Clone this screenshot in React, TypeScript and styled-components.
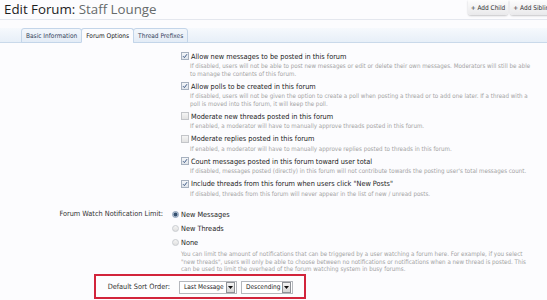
import React from "react";
import styled, { createGlobalStyle } from "styled-components";

const Global = createGlobalStyle`
  html, body { margin: 0; padding: 0; background: #fcfcfe; }
  body { width: 547px; height: 300px; overflow: hidden; }
`;

const Page = styled.div`
  width: 547px;
  height: 300px;
  overflow: hidden;
  background: #fcfcfe;
  font-family: "DejaVu Sans Condensed", "DejaVu Sans", sans-serif;
  color: #222;
`;

const Header = styled.header`
  display: flex;
  justify-content: space-between;
  align-items: flex-start;
  height: 19px;
  border-bottom: 1px solid #e4e7ee;
`;

const Title = styled.h1`
  margin: 0;
  padding: 1px 0 0 4px;
  font: normal 13.3px/16px "Open Sans", sans-serif;
  color: #1d1d1d;
`;

const TitleSub = styled.span`
  color: #666b6b;
`;

const Actions = styled.div`
  display: flex;
  gap: 2px;
  margin-right: -9px;
`;

const ActionButton = styled.span`
  display: inline-flex;
  align-items: center;
  height: 15px;
  padding: 0 3px;
  font-size: 6.5px;
  color: #333;
  border-radius: 0 0 3px 3px;
  background: linear-gradient(#fdfdfd, #e9e9eb);
  box-shadow: 0 1px 2px rgba(0, 0, 0, 0.22);
`;

const TabBar = styled.nav`
  display: flex;
  align-items: flex-end;
  margin-top: 8px;
  height: 14px;
  padding-left: 21px;
  background: linear-gradient(#f6f9fd, #e7eff8);
  border-bottom: 1px solid #c9d9ea;
`;

const Tab = styled.span<{ $active?: boolean }>`
  display: inline-flex;
  align-items: center;
  height: 13px;
  margin-bottom: -1px;
  padding: 0 4px;
  font-size: 6.5px;
  color: ${(p) => (p.$active ? "#222" : "#33425a")};
  background: ${(p) => (p.$active ? "#fcfcfe" : "linear-gradient(#f3f7fc, #e3ecf6)")};
  border: 1px solid #c3d5e9;
  border-bottom-color: ${(p) => (p.$active ? "#fcfcfe" : "#c3d5e9")};
  border-radius: 3px 3px 0 0;
  & + & {
    margin-left: -1px;
  }
`;

const Form = styled.div`
  padding-top: 8px;
`;

const Row = styled.div<{ $top?: number }>`
  display: grid;
  grid-template-columns: 163px 1fr;
  column-gap: 9px;
  margin-top: ${(p) => p.$top ?? 0}px;
`;

const RowLabel = styled.div`
  text-align: right;
  font-size: 7.3px;
  line-height: 14px;
  color: #333;
`;

const CheckList = styled.div`
  padding-left: 9px;
  padding-right: 10px;
`;

const CheckItem = styled.div`
  margin-bottom: 4px;
`;

const OptionLine = styled.div<{ $h: number }>`
  display: flex;
  align-items: center;
  gap: 2px;
  height: ${(p) => p.$h}px;
  font-size: 7.3px;
  color: #222;
`;

const Box = styled.span<{ $checked?: boolean }>`
  position: relative;
  flex: none;
  width: 6px;
  height: 6px;
  border: 1px solid ${(p) => (p.$checked ? "#a7b1bf" : "#c3c5c9")};
  background: ${(p) => (p.$checked ? "linear-gradient(#f4f6f9, #dfe4ea)" : "linear-gradient(#f5f5f5, #e2e2e2)")};
`;

const CheckSvg = styled.svg`
  position: absolute;
  left: 0;
  top: 0;
`;

const Radio = styled.span<{ $checked?: boolean }>`
  flex: none;
  width: 5px;
  height: 5px;
  border-radius: 50%;
  border: 1px solid ${(p) => (p.$checked ? "#8da0b8" : "#c9ccd0")};
  background: ${(p) =>
    p.$checked
      ? "radial-gradient(circle at 50% 50%, #34506f 0 1.6px, #aebccd 2.2px)"
      : "linear-gradient(#f4f4f4, #e0e0e0)"};
`;

const Desc = styled.div<{ $indent: number; $right?: number }>`
  padding-left: ${(p) => p.$indent}px;
  padding-right: ${(p) => p.$right ?? 0}px;
  margin-top: 1px;
  font-size: 6.2px;
  line-height: 7.5px;
  color: #a3a3a3;
`;

const SortBox = styled.div`
  display: grid;
  grid-template-columns: 74px auto;
  column-gap: 9px;
  align-items: center;
  margin: 1px 0 0 94px;
  width: 208px;
  height: 21px;
  border: 2px solid #d2243b;
  background: #fdfdfe;
`;

const SortLabel = styled.div`
  text-align: right;
  font-size: 7.3px;
  color: #333;
`;

const Selects = styled.div`
  display: flex;
  gap: 4px;
  margin-top: 2px;
`;

const Select = styled.div<{ $w: number }>`
  display: flex;
  align-items: center;
  justify-content: space-between;
  width: ${(p) => p.$w}px;
  height: 13px;
  box-sizing: border-box;
  padding: 0 1px 0 4px;
  border: 1px solid #b5b8bd;
  background: #fff;
  font-size: 6.5px;
  color: #222;
`;

const DropButton = styled.span`
  display: flex;
  align-items: center;
  justify-content: center;
  width: 7px;
  height: 9px;
  border: 1px solid #8e9196;
  background: linear-gradient(#f4f4f4, #d6d6d6);
`;

const CheckMark = () => (
  <CheckSvg width="6" height="6" viewBox="0 0 6 6">
    <path d="M1 3.2 L2.4 4.6 L5 1.2" fill="none" stroke="#3f5a86" strokeWidth="1" />
  </CheckSvg>
);

const Arrow = () => (
  <svg width="5" height="3" viewBox="0 0 5 3">
    <path d="M0 0 H5 L2.5 3 Z" fill="#111" />
  </svg>
);

const checks = [
  {
    checked: true,
    label: "Allow new messages to be posted in this forum",
    desc: "If disabled, users will not be able to post new messages or edit or delete their own messages. Moderators will still be able to manage the contents of this forum.",
  },
  {
    checked: true,
    label: "Allow polls to be created in this forum",
    desc: "If disabled, users will not be given the option to create a poll when posting a thread or to add one later. If a thread with a poll is moved into this forum, it will keep the poll.",
  },
  {
    checked: false,
    label: "Moderate new threads posted in this forum",
    desc: "If enabled, a moderator will have to manually approve threads posted in this forum.",
  },
  {
    checked: false,
    label: "Moderate replies posted in this forum",
    desc: "If enabled, a moderator will have to manually approve replies posted to threads in this forum.",
  },
  {
    checked: true,
    label: "Count messages posted in this forum toward user total",
    desc: "If disabled, messages posted (directly) in this forum will not contribute towards the posting user's total messages count.",
  },
  {
    checked: true,
    label: 'Include threads from this forum when users click "New Posts"',
    desc: "If disabled, threads from this forum will never appear in the list of new / unread posts.",
  },
];

const radios = [
  { label: "New Messages", checked: true },
  { label: "New Threads", checked: false },
  { label: "None", checked: false },
];

export default function App() {
  return (
    <Page>
      <Global />
      <Header>
        <Title>
          Edit Forum: <TitleSub>Staff Lounge</TitleSub>
        </Title>
        <Actions>
          <ActionButton>+ Add Child</ActionButton>
          <ActionButton>+ Add Sibling</ActionButton>
        </Actions>
      </Header>
      <TabBar>
        <Tab>Basic Information</Tab>
        <Tab $active>Forum Options</Tab>
        <Tab>Thread Prefixes</Tab>
      </TabBar>
      <Form>
        <Row>
          <div />
          <CheckList>
            {checks.map((c) => (
              <CheckItem key={c.label}>
                <OptionLine $h={10}>
                  <Box $checked={c.checked}>{c.checked && <CheckMark />}</Box>
                  {c.label}
                </OptionLine>
                <Desc $indent={9}>{c.desc}</Desc>
              </CheckItem>
            ))}
          </CheckList>
        </Row>
        <Row $top={6}>
          <RowLabel>Forum Watch Notification Limit:</RowLabel>
          <div>
            {radios.map((r) => (
              <OptionLine key={r.label} $h={14}>
                <Radio $checked={r.checked} />
                {r.label}
              </OptionLine>
            ))}
            <Desc $indent={9} $right={12}>
              You can limit the amount of notifications that can be triggered by a user watching a forum here. For example, if you
              select "new threads", users will only be able to choose between no notifications or notifications when a new thread is
              posted. This can be used to limit the overhead of the forum watching system in busy forums.
            </Desc>
          </div>
        </Row>
        <SortBox>
          <SortLabel>Default Sort Order:</SortLabel>
          <Selects>
            <Select $w={58}>
              Last Message
              <DropButton>
                <Arrow />
              </DropButton>
            </Select>
            <Select $w={52}>
              Descending
              <DropButton>
                <Arrow />
              </DropButton>
            </Select>
          </Selects>
        </SortBox>
      </Form>
    </Page>
  );
}
